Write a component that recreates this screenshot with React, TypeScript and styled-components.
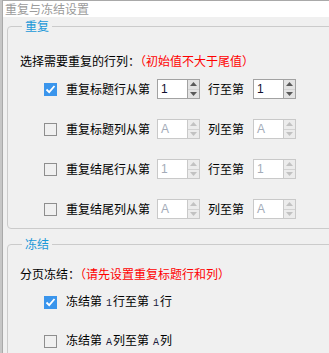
import styled, { createGlobalStyle } from 'styled-components';

const GlobalStyle = createGlobalStyle`
  html, body {
    margin: 0;
    padding: 0;
    background: #f0f0f0;
  }
  body {
    font-family: "Noto Sans CJK SC", "Noto Sans", sans-serif;
    font-size: 12px;
    color: #000;
  }
`;

const Desktop = styled.div`
  width: 329px;
  height: 353px;
  overflow: hidden;
  box-sizing: border-box;
  padding-left: 2px;
  background: #c6c6c6;
  display: flex;
`;

const Window = styled.div`
  flex: 1;
  display: flex;
  flex-direction: column;
  border-left: 1px solid #a9a9a9;
  border-top: 1px solid #a9a9a9;
  background: #f0f0f0;
`;

const TitleBar = styled.div`
  height: 24px;
  display: flex;
  align-items: center;
  padding-left: 2px;
  background: #fff;
  color: #9b9b9b;
  line-height: 16px;
`;

const Body = styled.div`
  padding-left: 4px;
  margin-right: -20px;
`;

const Group = styled.fieldset<{ $top: number; $pad: number }>`
  margin: ${(p) => p.$top}px 0 0 0;
  padding: ${(p) => p.$pad}px 0 9px 12px;
  border: 1px solid #cbcbcb;
  border-radius: 4px;
  min-width: 0;
`;

const Legend = styled.legend`
  margin-left: 2px;
  padding: 0 3px;
  line-height: 16px;
  color: #1a98d8;
`;

const Heading = styled.div`
  line-height: 16px;
  height: 16px;
  white-space: nowrap;
`;

const Hint = styled.span`
  color: #ff0000;
`;

const Rows = styled.div<{ $gap: number; $top: number }>`
  display: flex;
  flex-direction: column;
  gap: ${(p) => p.$gap}px;
  margin-top: ${(p) => p.$top}px;
  padding-left: 24px;
`;

const Row = styled.div`
  height: 20px;
  display: flex;
  align-items: center;
  white-space: nowrap;
  line-height: 16px;
`;

const Box = styled.div<{ $checked?: boolean }>`
  width: 13px;
  height: 13px;
  box-sizing: border-box;
  margin-right: 9px;
  flex-shrink: 0;
  display: flex;
  align-items: center;
  justify-content: center;
  background: ${(p) => (p.$checked ? '#3a95ec' : 'transparent')};
  border: ${(p) => (p.$checked ? 'none' : '1px solid #8e8e8e')};
`;

const Label = styled.span<{ $gap: number }>`
  margin-right: ${(p) => p.$gap}px;
`;

const Digit = styled.span`
  font-family: "Liberation Mono", monospace;
  font-size: 10px;
  color: #1b1b3a;
  margin: 0 1px 0 4px;
`;

const Spin = styled.div<{ $gap: number }>`
  display: flex;
  height: 20px;
  margin-right: ${(p) => p.$gap}px;
`;

const SpinInput = styled.div<{ $disabled?: boolean }>`
  width: 30px;
  box-sizing: border-box;
  padding-left: 3px;
  border: 1px solid ${(p) => (p.$disabled ? '#c9c9c9' : '#a2a2a2')};
  border-right: none;
  background: #fff;
  font-family: "Liberation Sans", sans-serif;
  font-size: 12px;
  line-height: 18px;
  color: ${(p) => (p.$disabled ? '#a3abb8' : '#101030')};
`;

const SpinButtons = styled.div<{ $disabled?: boolean }>`
  width: 13px;
  box-sizing: border-box;
  display: flex;
  flex-direction: column;
  border: 1px solid ${(p) => (p.$disabled ? '#c9c9c9' : '#a2a2a2')};
  background: ${(p) => (p.$disabled ? '#ececec' : '#e3e3e3')};
  color: ${(p) => (p.$disabled ? '#c2c2c2' : '#5a5a5a')};
`;

const SpinButton = styled.div<{ $disabled?: boolean }>`
  flex: 1;
  display: flex;
  align-items: center;
  justify-content: center;
  & + & {
    border-top: 1px solid ${(p) => (p.$disabled ? '#d2d2d2' : '#b0b0b0')};
  }
`;

function Arrow({ down }: { down?: boolean }) {
  return (
    <svg width="7" height="4" viewBox="0 0 7 4">
      <polygon points={down ? '0,0 7,0 3.5,4' : '0,4 7,4 3.5,0'} fill="currentColor" />
    </svg>
  );
}

function Check({ checked }: { checked?: boolean }) {
  return (
    <Box $checked={checked}>
      {checked && (
        <svg width="11" height="11" viewBox="0 0 11 11">
          <polyline points="1.5,5.5 4.2,8.2 9.5,2" fill="none" stroke="#fff" strokeWidth="1.8" />
        </svg>
      )}
    </Box>
  );
}

function SpinBox({ value, disabled, gap }: { value: string; disabled?: boolean; gap: number }) {
  return (
    <Spin $gap={gap}>
      <SpinInput $disabled={disabled}>{value}</SpinInput>
      <SpinButtons $disabled={disabled}>
        <SpinButton $disabled={disabled}>
          <Arrow />
        </SpinButton>
        <SpinButton $disabled={disabled}>
          <Arrow down />
        </SpinButton>
      </SpinButtons>
    </Spin>
  );
}

const repeatRows = [
  { label: '重复标题行从第', to: '行至第', value: '1', checked: true },
  { label: '重复标题列从第', to: '列至第', value: 'A', checked: false },
  { label: '重复结尾行从第', to: '行至第', value: '1', checked: false },
  { label: '重复结尾列从第', to: '列至第', value: 'A', checked: false },
];

export default function App() {
  return (
    <>
      <GlobalStyle />
      <Desktop>
        <Window>
          <TitleBar>重复与冻结设置</TitleBar>
          <Body>
            <Group $top={1} $pad={19}>
              <Legend>重复</Legend>
              <Heading>
                选择需要重复的行列：<Hint>（初始值不大于尾值）</Hint>
              </Heading>
              <Rows $gap={20} $top={10}>
                {repeatRows.map((r) => (
                  <Row key={r.label}>
                    <Check checked={r.checked} />
                    <Label $gap={7}>{r.label}</Label>
                    <SpinBox value={r.value} disabled={!r.checked} gap={8} />
                    <Label $gap={9}>{r.to}</Label>
                    <SpinBox value={r.value} disabled={!r.checked} gap={0} />
                  </Row>
                ))}
              </Rows>
            </Group>
            <Group $top={7} $pad={14}>
              <Legend>冻结</Legend>
              <Heading>
                分页冻结：<Hint>（请先设置重复标题行和列）</Hint>
              </Heading>
              <Rows $gap={19} $top={10}>
                <Row>
                  <Check checked />
                  <Label $gap={0}>
                    冻结第<Digit>1</Digit>行至第<Digit>1</Digit>行
                  </Label>
                </Row>
                <Row>
                  <Check />
                  <Label $gap={0}>
                    冻结第<Digit>A</Digit>列至第<Digit>A</Digit>列
                  </Label>
                </Row>
              </Rows>
            </Group>
          </Body>
        </Window>
      </Desktop>
    </>
  );
}
